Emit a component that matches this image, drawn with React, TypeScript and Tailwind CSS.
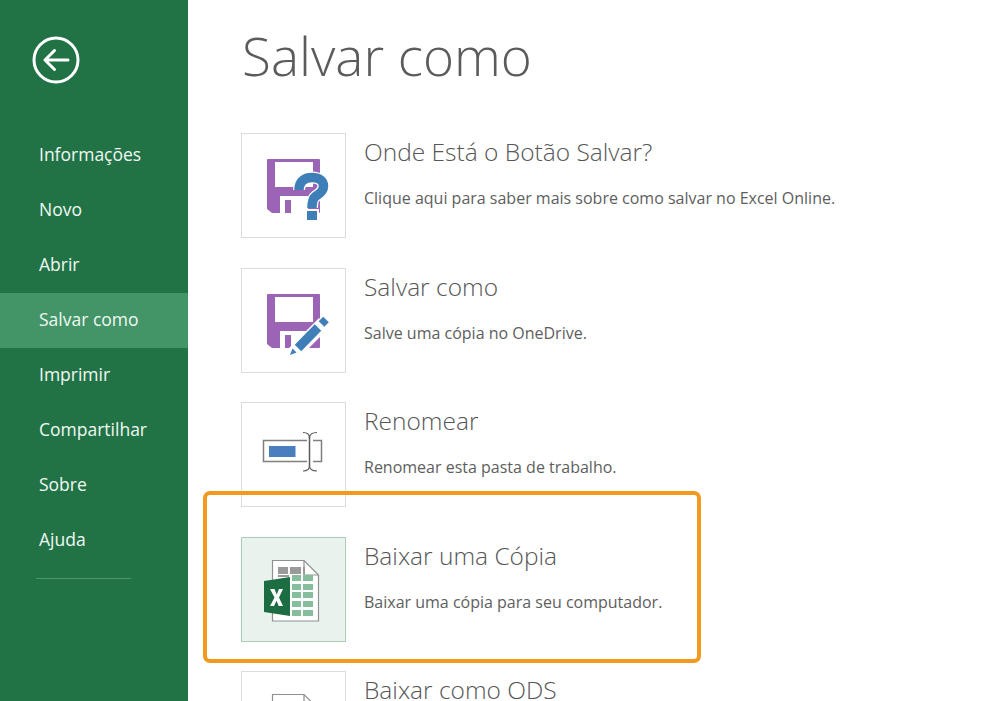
import React from 'react';

const FONT = "font-['Open_Sans','Noto_Sans',sans-serif]";

const menu = ['Informações', 'Novo', 'Abrir', 'Salvar como', 'Imprimir', 'Compartilhar', 'Sobre', 'Ajuda'];

const BackIcon = () => (
  <svg width="48" height="48" viewBox="0 0 48 48" fill="none" stroke="#fff" strokeLinecap="round" strokeLinejoin="round">
    <circle cx="24" cy="24" r="22" strokeWidth="3" />
    <path d="M36 24H13M22.5 14.5L13 24l9.5 9.5" strokeWidth="3" />
  </svg>
);

// all the tile icons are drawn in the 104x104 space of the tile
const Tile = ({ children }: { children: React.ReactNode }) => (
  <svg width="104" height="104" viewBox="0 0 104 104" fill="none">
    {children}
  </svg>
);

const Disk = () => (
  <>
    <path d="M26 25H77a1 1 0 0 1 1 1V78a1 1 0 0 1-1 1H30l-5-4V26a1 1 0 0 1 1-1Z" fill="#9b64b4" />
    <rect x="33" y="28" width="38" height="25" fill="#fff" />
    <rect x="38" y="62" width="28" height="17" fill="#fff" />
    <rect x="43" y="66" width="6" height="13" fill="#9b64b4" />
  </>
);

const HELP_HOOK = 'M57 56C57 46 64 43.500 70 43.500C77 43.500 81.500 47 81.500 52C81.500 58 77 60 74 62C71 64 70 67 70 74';

const HelpIcon = () => (
  <Tile>
    <Disk />
    <path d={HELP_HOOK} stroke="#fff" strokeWidth="12" />
    <rect x="63" y="75" width="14" height="13" fill="#fff" />
    <path d={HELP_HOOK} stroke="#3f7fb8" strokeWidth="9.500" />
    <rect x="65" y="77" width="10" height="9" fill="#3f7fb8" />
  </Tile>
);

const PencilIcon = () => (
  <Tile>
    <Disk />
    <path d="M50 86L82 54" stroke="#fff" strokeWidth="14" />
    <path d="M56 79L76 58.500" stroke="#3f7fb8" strokeWidth="9" />
    <path d="M79.500 55L84 50.500" stroke="#3f7fb8" strokeWidth="8" />
    <path d="M48 86L50.500 79.500L54.500 83.500Z" fill="#3f7fb8" />
  </Tile>
);

const RenameIcon = () => (
  <Tile>
    <path d="M65 37.500H21.500V58.500H65M71 37.500H79.500V58.500H71" stroke="#808080" strokeWidth="1.500" />
    <rect x="27" y="43" width="26.500" height="11" fill="#4a7fbd" />
    <path d="M67.500 34V63" stroke="#5a5a5a" strokeWidth="1.500" />
    <path d="M61 29.500C64.500 29.500 67.500 31 67.500 35C67.500 31 71 29.500 75 29.500M61 68C64.500 68 67.500 66.500 67.500 62.500C67.500 66.500 71 68 75 68" stroke="#5a5a5a" strokeWidth="1.200" />
  </Tile>
);

const rowsY = [37, 46, 54, 63, 72];

const SheetIcon = ({ full }: { full: boolean }) => (
  <Tile>
    <path d="M30.500 22.500H62L76.500 37V83H30.500Z" fill="#fff" stroke="#8f9191" strokeWidth="1.200" />
    <path d="M62 22.500V37H76.500" stroke="#8f9191" strokeWidth="1.200" />
    {full && (
      <>
        <rect x="36" y="29" width="10" height="7" fill="#9a9a9a" />
        <rect x="48" y="29" width="11" height="7" fill="#9a9a9a" />
        <rect x="61" y="29" width="2" height="7" fill="#9a9a9a" />
        <rect x="36" y="37" width="11" height="2" fill="#9a9a9a" />
        {rowsY.map((y) => (
          <React.Fragment key={y}>
            <rect x="50" y={y} width="9" height="6" fill="#86bd9c" />
            <rect x="61" y={y} width="10" height="6" fill="#86bd9c" />
          </React.Fragment>
        ))}
        <path d="M22 43L48 39V78L22 74Z" fill="#1d6d42" />
        <path d="M28 51H32.500L34.700 56.500L37 51H41L37 59.500L41 68H36.700L34.500 62.700L32 68H28L32.500 59.500Z" fill="#fff" />
      </>
    )}
  </Tile>
);

const rows: { title: string; text?: string; icon: React.ReactNode; active?: boolean }[] = [
  { title: 'Onde Está o Botão Salvar?', text: 'Clique aqui para saber mais sobre como salvar no Excel Online.', icon: <HelpIcon /> },
  { title: 'Salvar como', text: 'Salve uma cópia no OneDrive.', icon: <PencilIcon /> },
  { title: 'Renomear', text: 'Renomear esta pasta de trabalho.', icon: <RenameIcon /> },
  { title: 'Baixar uma Cópia', text: 'Baixar uma cópia para seu computador.', icon: <SheetIcon full />, active: true },
  { title: 'Baixar como ODS', icon: <SheetIcon full={false} /> },
];

const App: React.FC = () => {
  return (
    <div className={`relative flex w-[984px] h-[701px] overflow-hidden bg-white ${FONT}`}>
      <aside className="w-[188px] shrink-0 bg-[#217346] text-[#f1f8f4]">
        <div className="pt-[36px] pl-[32px] h-[128px]">
          <BackIcon />
        </div>
        <nav>
          {menu.map((item) => (
            <div
              key={item}
              className={`h-[55px] pl-[39px] pb-[3px] flex items-center text-[17.500px] ${item === 'Salvar como' ? 'bg-[#439467]' : ''}`}
            >
              {item}
            </div>
          ))}
        </nav>
        <div className="mt-[10px] ml-[36px] w-[95px] h-px bg-[#4d9570]" />
      </aside>

      <main className="flex-1 pl-[53px]">
        <h1 className="pt-[22px] pl-[1px] h-[133px] text-[53px] leading-[68px] font-light text-[#5b5b5b]">Salvar como</h1>
        <div className="flex flex-col gap-[30.500px]">
          {rows.map((row) => (
            <div key={row.title} className="flex h-[104px] shrink-0">
              <div
                className={`w-[105px] h-[105px] shrink-0 border ${
                  row.active ? 'bg-[#e9f3ee] border-[#a9cdb9]' : 'border-[#dcdcdc]'
                }`}
              >
                {row.icon}
              </div>
              <div className="pl-[18px]">
                <div className="pt-[1px] text-[24.500px] leading-[36px] font-light text-[#565656]">{row.title}</div>
                <div className="mt-[18px] text-[16px] leading-[20px] text-[#5e5e5e]">{row.text}</div>
              </div>
            </div>
          ))}
        </div>
      </main>

      {/* destaque laranja em cima da linha "Baixar uma Cópia" */}
      <div className="absolute left-[203px] top-[491px] w-[498px] h-[172px] border-[4px] border-[#f09a1e] rounded-[7px]" />
    </div>
  );
};

export default App;
